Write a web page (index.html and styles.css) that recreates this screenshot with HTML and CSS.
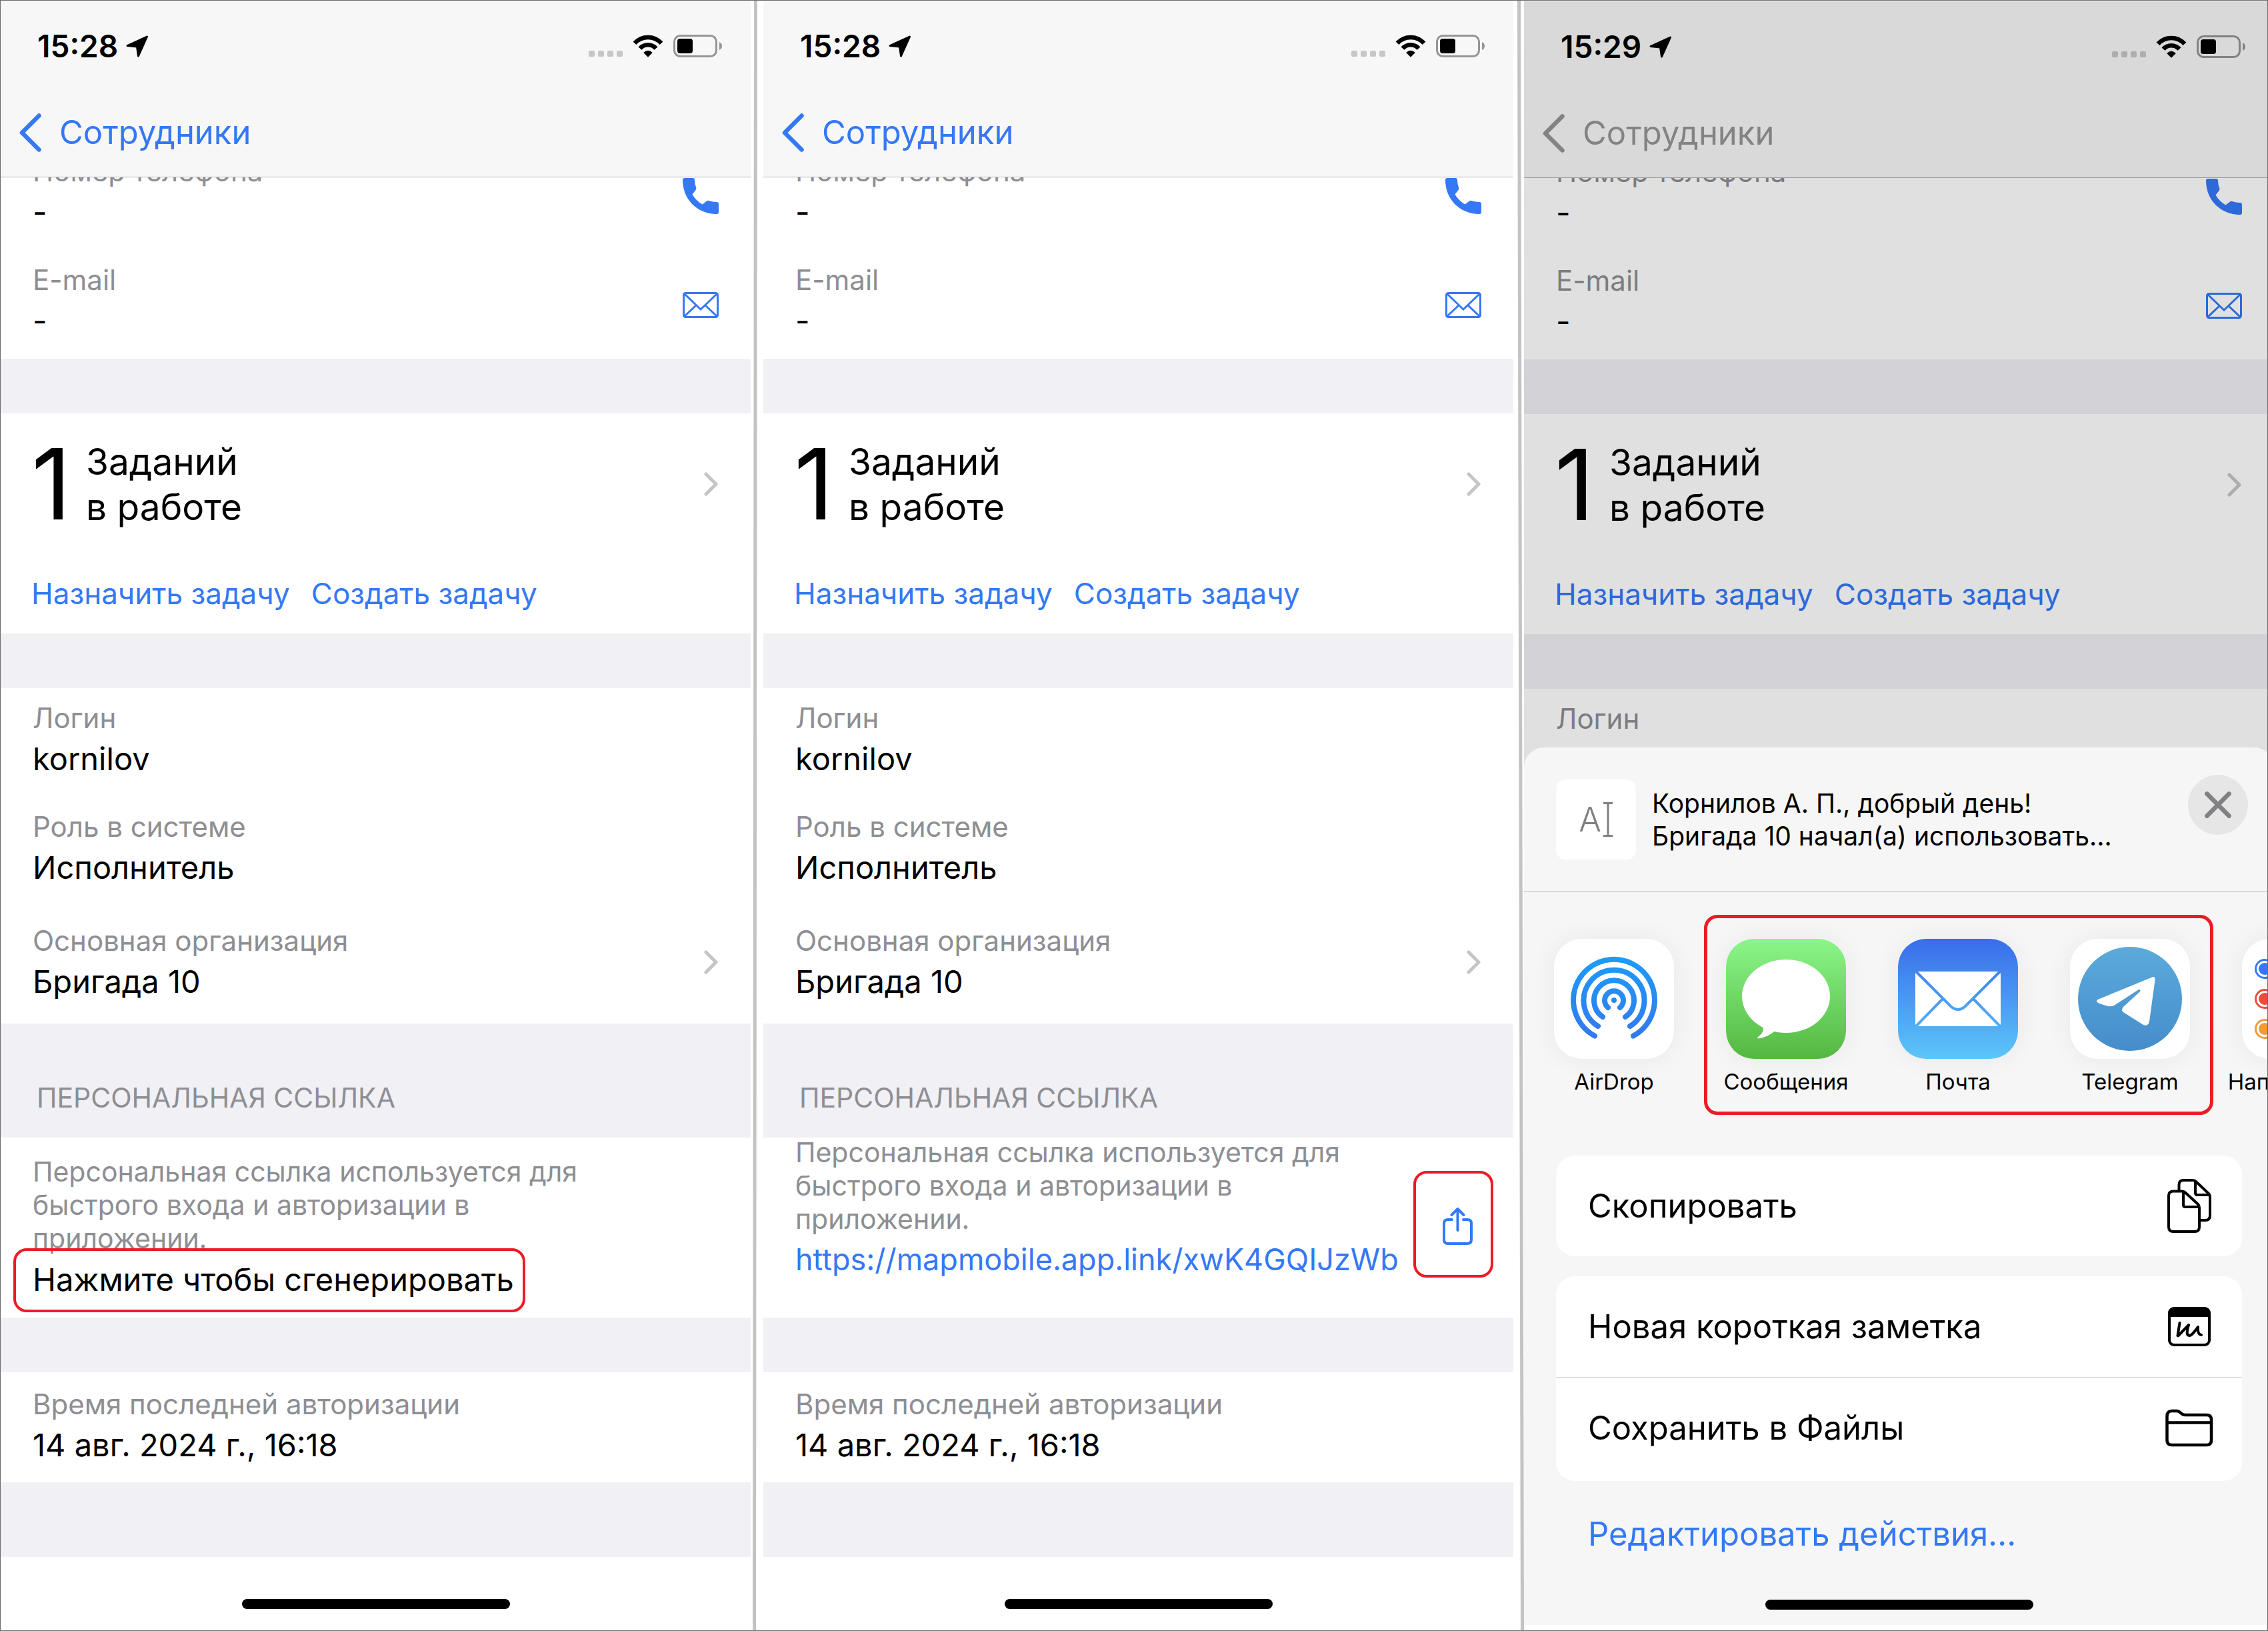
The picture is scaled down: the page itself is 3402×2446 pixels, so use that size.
FILE: index.html
```html
<!DOCTYPE html>
<html lang="ru">
<head>
    <meta charset="UTF-8">
    <meta name="viewport" content="width=device-width, initial-scale=1.0">
    <title>Персональная ссылка</title>
    <link rel="stylesheet" href="styles.css">
</head>
<body>
    <!-- Shared icons -->
    <svg class="sprite" width="0" height="0">
        <symbol id="arrow" viewBox="0 0 34 33">
            <path d="M31.5 2 L18.5 31 L16.5 17 L2 15.5 Z" fill="currentColor" stroke="currentColor" stroke-width="3" stroke-linejoin="round"/>
        </symbol>
        <symbol id="dots" viewBox="0 0 52 34">
            <g fill="currentColor">
                <rect x="0" y="24" width="9" height="9" rx="2"/>
                <rect x="14" y="24" width="9" height="9" rx="2"/>
                <rect x="28" y="24" width="9" height="9" rx="2"/>
                <rect x="42" y="24" width="9" height="9" rx="2"/>
            </g>
        </symbol>
        <symbol id="wifi" viewBox="0 0 46 34">
            <path d="M3 12.8 A27 27 0 0 1 43 12.8 M11 20.6 A16 16 0 0 1 35 20.6" fill="none" stroke="currentColor" stroke-width="6.6"/>
            <path d="M16.2 27 Q23 20.5 29.8 27 L23 33.7 Z" fill="currentColor"/>
        </symbol>
        <symbol id="battery" viewBox="0 0 73 34">
            <rect x="1.5" y="1.5" width="63" height="31" rx="9" fill="none" stroke="#959595" stroke-width="3"/>
            <rect x="6" y="6" width="23" height="22" rx="4"/>
            <path d="M69 11 Q73 13 73 17 Q73 21 69 23 Z" fill="#959595"/>
        </symbol>
        <symbol id="back" viewBox="0 0 34 58">
            <path d="M30.5 3.5 L5 29 L30.5 54.5" fill="none" stroke="currentColor" stroke-width="6.5" stroke-linecap="round" stroke-linejoin="round"/>
        </symbol>
        <symbol id="next" viewBox="0 0 22 36">
            <path d="M3 3 L18 18 L3 33" fill="none" stroke="currentColor" stroke-width="5" stroke-linecap="round" stroke-linejoin="round"/>
        </symbol>
        <symbol id="phone" viewBox="0 0 54 54">
            <path d="M3 0 H15 Q18 0 18 3 Q18 10 20.3 14.5 Q20.8 16.5 19.5 18 L14.5 24.5 Q20 34 29.5 39.5 L36 34.5 Q38 33.3 40 34.3 Q45 36 51 36 Q54 36 54 39 V51 Q54 54 51 54 C22 54 0 32 0 3 Q0 0 3 0 Z" fill="currentColor"/>
        </symbol>
        <symbol id="mail" viewBox="0 0 54 39">
            <g fill="none" stroke="currentColor" stroke-width="3">
                <rect x="1.5" y="1.5" width="51" height="36" rx="3"/>
                <path d="M3 3 L27 26 L51 3 M3 36 L20.5 19.5 M51 36 L33.5 19.5"/>
            </g>
        </symbol>
        <symbol id="share" viewBox="0 0 45 56">
            <g fill="none" stroke="currentColor" stroke-width="4" stroke-linecap="round" stroke-linejoin="round">
                <path d="M14 18 H8 Q2 18 2 24 V48 Q2 54 8 54 H37 Q43 54 43 48 V24 Q43 18 37 18 H31"/>
                <path d="M22.5 34 V3 M13.5 11 L22.5 2 L31.5 11"/>
            </g>
        </symbol>
    </svg>

    <main class="screens">
        <section class="panel">
            <div class="screen">
                <header class="top">
                    <div class="status">
                        <span class="time">15:28</span>
                        <svg class="location"><use href="#arrow"/></svg>
                        <svg class="dots"><use href="#dots"/></svg>
                        <svg class="wifi"><use href="#wifi"/></svg>
                        <svg class="battery"><use href="#battery"/></svg>
                    </div>
                    <a class="back" href="#"><svg><use href="#back"/></svg>Сотрудники</a>
                </header>
                <div class="group contacts">
                    <div class="field">
                        <div><p class="label">Номер телефона</p><p class="value">-</p></div>
                        <button class="icon" aria-label="Позвонить"><svg class="phone-icon"><use href="#phone"/></svg></button>
                    </div>
                    <div class="field">
                        <div><p class="label">E-mail</p><p class="value">-</p></div>
                        <button class="icon" aria-label="Написать"><svg class="mail-icon"><use href="#mail"/></svg></button>
                    </div>
                </div>
                <div class="gap"></div>
                <div class="group tasks">
                    <div class="count">
                        <span class="number">1</span>
                        <span class="caption">Заданий<br>в работе</span>
                        <svg class="next"><use href="#next"/></svg>
                    </div>
                    <div class="links">
                        <a href="#">Назначить задачу</a>
                        <a href="#">Создать задачу</a>
                    </div>
                </div>
                <div class="gap"></div>
                <div class="group">
                    <div class="field">
                        <div><p class="label">Логин</p><p class="value">kornilov</p></div>
                    </div>
                    <div class="field">
                        <div><p class="label">Роль в системе</p><p class="value">Исполнитель</p></div>
                    </div>
                    <div class="field org">
                        <div><p class="label">Основная организация</p><p class="value">Бригада 10</p></div>
                        <svg class="next"><use href="#next"/></svg>
                    </div>
                </div>
                <h2 class="gap-title">ПЕРСОНАЛЬНАЯ ССЫЛКА</h2>
                <div class="group personal">
                    <p class="note">Персональная ссылка используется для быстрого входа и авторизации в приложении.</p>
                    <button class="generate">Нажмите чтобы сгенерировать<span class="mark"></span></button>
                </div>
                <div class="gap"></div>
                <div class="group">
                    <div class="field last">
                        <div><p class="label">Время последней авторизации</p><p class="value">14 авг. 2024 г., 16:18</p></div>
                    </div>
                </div>
                <div class="gap tail"></div>
                <div class="home"></div>
            </div>
        </section>

        <svg class="divider" viewBox="0 0 19 100" preserveAspectRatio="none"><path d="M5 0 H10 L8 100 H3 Z"/></svg>

        <section class="panel">
            <div class="screen">
                <header class="top">
                    <div class="status">
                        <span class="time">15:28</span>
                        <svg class="location"><use href="#arrow"/></svg>
                        <svg class="dots"><use href="#dots"/></svg>
                        <svg class="wifi"><use href="#wifi"/></svg>
                        <svg class="battery"><use href="#battery"/></svg>
                    </div>
                    <a class="back" href="#"><svg><use href="#back"/></svg>Сотрудники</a>
                </header>
                <div class="group contacts">
                    <div class="field">
                        <div><p class="label">Номер телефона</p><p class="value">-</p></div>
                        <button class="icon" aria-label="Позвонить"><svg class="phone-icon"><use href="#phone"/></svg></button>
                    </div>
                    <div class="field">
                        <div><p class="label">E-mail</p><p class="value">-</p></div>
                        <button class="icon" aria-label="Написать"><svg class="mail-icon"><use href="#mail"/></svg></button>
                    </div>
                </div>
                <div class="gap"></div>
                <div class="group tasks">
                    <div class="count">
                        <span class="number">1</span>
                        <span class="caption">Заданий<br>в работе</span>
                        <svg class="next"><use href="#next"/></svg>
                    </div>
                    <div class="links">
                        <a href="#">Назначить задачу</a>
                        <a href="#">Создать задачу</a>
                    </div>
                </div>
                <div class="gap"></div>
                <div class="group">
                    <div class="field">
                        <div><p class="label">Логин</p><p class="value">kornilov</p></div>
                    </div>
                    <div class="field">
                        <div><p class="label">Роль в системе</p><p class="value">Исполнитель</p></div>
                    </div>
                    <div class="field org">
                        <div><p class="label">Основная организация</p><p class="value">Бригада 10</p></div>
                        <svg class="next"><use href="#next"/></svg>
                    </div>
                </div>
                <h2 class="gap-title">ПЕРСОНАЛЬНАЯ ССЫЛКА</h2>
                <div class="group personal ready">
                    <div>
                        <p class="note">Персональная ссылка используется для быстрого входа и авторизации в приложении.</p>
                        <a class="url" href="#">https://mapmobile.app.link/xwK4GQIJzWb</a>
                    </div>
                    <button class="icon share" aria-label="Поделиться"><svg><use href="#share"/></svg><span class="mark"></span></button>
                </div>
                <div class="gap"></div>
                <div class="group">
                    <div class="field last">
                        <div><p class="label">Время последней авторизации</p><p class="value">14 авг. 2024 г., 16:18</p></div>
                    </div>
                </div>
                <div class="gap tail"></div>
                <div class="home"></div>
            </div>
        </section>

        <svg class="divider" viewBox="0 0 16 100" preserveAspectRatio="none"><path d="M6 0 H11 L16 100 H11 Z"/></svg>

        <section class="panel cropped">
            <div class="screen">
                <header class="top inactive">
                    <div class="status">
                        <span class="time">15:29</span>
                        <svg class="location"><use href="#arrow"/></svg>
                        <svg class="dots"><use href="#dots"/></svg>
                        <svg class="wifi"><use href="#wifi"/></svg>
                        <svg class="battery"><use href="#battery"/></svg>
                    </div>
                    <a class="back" href="#"><svg><use href="#back"/></svg>Сотрудники</a>
                </header>
                <div class="group contacts">
                    <div class="field">
                        <div><p class="label">Номер телефона</p><p class="value">-</p></div>
                        <button class="icon" aria-label="Позвонить"><svg class="phone-icon"><use href="#phone"/></svg></button>
                    </div>
                    <div class="field">
                        <div><p class="label">E-mail</p><p class="value">-</p></div>
                        <button class="icon" aria-label="Написать"><svg class="mail-icon"><use href="#mail"/></svg></button>
                    </div>
                </div>
                <div class="gap"></div>
                <div class="group tasks">
                    <div class="count">
                        <span class="number">1</span>
                        <span class="caption">Заданий<br>в работе</span>
                        <svg class="next"><use href="#next"/></svg>
                    </div>
                    <div class="links">
                        <a href="#">Назначить задачу</a>
                        <a href="#">Создать задачу</a>
                    </div>
                </div>
                <div class="gap"></div>
                <div class="group">
                    <div class="field">
                        <p class="label">Логин</p>
                    </div>
                </div>
                <div class="dim"></div>

                <div class="sheet">
                    <div class="sheet-head">
                        <div class="thumb">A<svg viewBox="0 0 16 52"><path d="M1 1.5 H15 M8 1.5 V50.5 M1 50.5 H15" fill="none" stroke="currentColor" stroke-width="3"/></svg></div>
                        <p class="message">Корнилов А. П., добрый день!<br>Бригада 10 начал(а) использовать…</p>
                        <button class="close" aria-label="Закрыть"><svg viewBox="0 0 38 38"><path d="M4 4 L34 34 M34 4 L4 34" fill="none" stroke="#818185" stroke-width="6" stroke-linecap="round"/></svg></button>
                    </div>

                    <div class="apps">
                        <button class="app">
                            <svg class="tile" viewBox="0 0 180 180">
                                <defs><linearGradient id="airdropFill" gradientUnits="userSpaceOnUse" x1="0" y1="27" x2="0" y2="150"><stop offset="0" stop-color="#1c9cf9"/><stop offset="1" stop-color="#3478ee"/></linearGradient></defs>
                                <rect width="180" height="180" fill="#fff"/>
                                <g fill="none" stroke="url(#airdropFill)" stroke-width="8" stroke-linecap="round">
                                    <path d="M61 145.500 A61 61 0 1 1 119 145.500"/>
                                    <path d="M66 131 A45.500 45.500 0 1 1 114 131"/>
                                    <path d="M73 117 A30 30 0 1 1 107 117"/>
                                    <path d="M81 103 A14 14 0 1 1 99 103"/>
                                </g>
                                <circle cx="90" cy="92" r="4" fill="url(#airdropFill)"/>
                            </svg>
                            <span>AirDrop</span>
                        </button>
                        <div class="marked">
                            <button class="app">
                                <svg class="tile" viewBox="0 0 180 180">
                                    <defs><linearGradient id="messagesFill" x1="0" y1="0" x2="0" y2="1"><stop offset="0" stop-color="#8bf689"/><stop offset="1" stop-color="#54b741"/></linearGradient></defs>
                                    <rect width="180" height="180" fill="url(#messagesFill)"/>
                                    <ellipse cx="90" cy="86" rx="66" ry="55" fill="#fff"/>
                                    <path d="M53 129 C60 137 53 143 48 147 C46 149 48 150 51 149 C61 147 67 143 74 138 Z" fill="#fff"/>
                                </svg>
                                <span>Сообщения</span>
                            </button>
                            <button class="app">
                                <svg class="tile" viewBox="0 0 180 180">
                                    <defs><linearGradient id="mailFill" gradientUnits="userSpaceOnUse" x1="0" y1="0" x2="0" y2="180"><stop offset="0" stop-color="#386dea"/><stop offset="1" stop-color="#5cc6f9"/></linearGradient></defs>
                                    <rect width="180" height="180" fill="url(#mailFill)"/>
                                    <rect x="26" y="49" width="128" height="82" rx="4" fill="#fff"/>
                                    <path d="M27 49 L79 101 Q90 111 101 101 L153 49 M27 131 L67 90 M153 131 L113 90" fill="none" stroke="url(#mailFill)" stroke-width="4"/>
                                </svg>
                                <span>Почта</span>
                            </button>
                            <button class="app">
                                <svg class="tile" viewBox="0 0 180 180">
                                    <defs><linearGradient id="telegramFill" x1="0" y1="0" x2="0" y2="1"><stop offset="0" stop-color="#5caadc"/><stop offset="1" stop-color="#458dcb"/></linearGradient></defs>
                                    <rect width="180" height="180" fill="#fff"/>
                                    <circle cx="90" cy="90" r="78" fill="url(#telegramFill)"/>
                                    <path d="M122 58 Q128 55 127.500 62 L119 124 Q117 132 110 129 L80 110 Q76 107 80 102 L105 79 Q107 76 103 76 L66 100 Q61 102 57 101 L44 97 Q36 93 44 90 Z" fill="#fff"/>
                                </svg>
                                <span>Telegram</span>
                            </button>
                            <span class="mark"></span>
                        </div>
                        <button class="app">
                            <svg class="tile" viewBox="0 0 180 180">
                                <rect width="180" height="180" fill="#fff"/>
                                <g fill="#3478f6"><circle cx="34" cy="45" r="9"/><circle cx="34" cy="45" r="13.500" fill="none" stroke="#3478f6" stroke-width="3"/></g>
                                <g fill="#eb4e3d"><circle cx="34" cy="90" r="9"/><circle cx="34" cy="90" r="13.500" fill="none" stroke="#eb4e3d" stroke-width="3"/></g>
                                <g fill="#f19a37"><circle cx="34" cy="135" r="9"/><circle cx="34" cy="135" r="13.500" fill="none" stroke="#f19a37" stroke-width="3"/></g>
                            </svg>
                            <span>Напоминания</span>
                        </button>
                    </div>

                    <div class="card">
                        <button class="action">Скопировать
                            <svg viewBox="-3 0 72 81">
                                <g fill="none" stroke="currentColor" stroke-width="4" stroke-linejoin="round">
                                    <path d="M17.500 18 V9 Q17.500 2 24 2 H38 Q41 2 43 4 L62 22 Q64 24 64 27 V55 Q64 62 57 62 H50"/>
                                    <path d="M42 3 V21 Q42 24 45 24 H63"/>
                                    <path d="M9 18.500 H22 Q25 18.500 27 20.500 L46 38 Q48 40 48 43 V72 Q48 79 41 79 H9 Q2 79 2 72 V25 Q2 18.500 9 18.500 Z"/>
                                    <path d="M24 20 V39 Q24 42 27 42 H47"/>
                                </g>
                            </svg>
                        </button>
                    </div>
                    <div class="card">
                        <button class="action">Новая короткая заметка
                            <svg viewBox="-4 0 72 59">
                                <rect x="2" y="2" width="60" height="55" rx="7" fill="none" stroke="currentColor" stroke-width="4"/>
                                <path d="M2 15 V7 Q2 2 8 2 H56 Q62 2 62 7 V15 Z"/>
                                <path d="M17.500 24 L14.500 43 Q15 44 16.500 42 L31 27 Q26 43 32 43 Q36 43 45 30 Q44 41 50 42" fill="none" stroke="currentColor" stroke-width="4" stroke-linecap="round" stroke-linejoin="round"/>
                            </svg>
                        </button>
                        <button class="action">Сохранить в Файлы
                            <svg viewBox="0 0 72 57">
                                <path d="M2.500 11 Q2.500 3 10 3 H17 Q20 3 23 6 Q26 9 30 9 H62 Q69 9 69 16 V47 Q69 54 62 54 H10 Q2.500 54 2.500 47 Z M3 20.500 H69" fill="none" stroke="currentColor" stroke-width="4.500"/>
                            </svg>
                        </button>
                    </div>
                    <a class="edit" href="#">Редактировать действия…</a>
                    <div class="home"></div>
                </div>
            </div>
        </section>
    </main>
</body>
</html>
```
FILE: styles.css
```css
* {
    box-sizing: border-box;
}
body {
    margin: 0;
    font-family: Inter, "Liberation Sans", sans-serif;
    color: #000;
    background-color: #fff;
}
p, h2 {
    margin: 0;
    font-weight: 400;
}
a {
    color: #3478f6;
    text-decoration: none;
}
button {
    font: inherit;
    color: inherit;
    background: none;
    border: 0;
    padding: 0;
    text-align: left;
    cursor: pointer;
}
svg {
    display: block;
    flex: none;
}
.sprite {
    position: absolute;
}
.screens {
    display: grid;
    grid-template-columns: 1125fr 19px 1125fr 16px 1115fr;
    min-height: 100vh;
    border: 1px solid #6b6b6b;
}
.panel {
    overflow: hidden;
}
.divider {
    width: 100%;
    height: 100%;
    fill: #c3c3c3;
    min-height: 0;
    contain: size;
}
.screen {
    position: relative;
    height: 100%;
}

/* Status and navigation bars */
.top {
    position: relative;
    z-index: 1;
    padding-top: 40px;
    padding-bottom: 36px;
    background-color: #f7f7f7;
    border-bottom: 1px solid #b0b0b0;
}
.status {
    display: flex;
    align-items: center;
    padding: 0 43px 0 55px;
    margin-bottom: 72px;
}
.time {
    font-size: 46px;
    line-height: 56px;
    font-weight: 600;
}
.location {
    width: 34px;
    height: 33px;
    margin-left: 12px;
}
.dots {
    width: 52px;
    height: 34px;
    margin-left: auto;
    color: #c6c6c6;
}
.wifi {
    width: 46px;
    height: 34px;
    margin: 0 15px 0 14px;
}
.battery {
    width: 73px;
    height: 34px;
}
.back {
    display: flex;
    align-items: center;
    gap: 27px;
    padding-left: 27px;
    font-size: 49px;
    line-height: 60px;
}
.back svg {
    width: 34px;
    height: 58px;
}
.inactive .back {
    color: #969696;
}

/* Groups */
.contacts {
    margin-top: -54px;
}
.gap {
    height: 82px;
    background-color: #f1f0f5;
}
.tail {
    height: 112px;
}
.gap-title {
    padding: 86px 54px 35px;
    font-size: 41px;
    line-height: 50px;
    color: #8e8e93;
    background-color: #f1f0f5;
}
.field {
    display: flex;
    align-items: center;
    justify-content: space-between;
    padding: 20px 48px 29px;
}
.org {
    padding-top: 28px;
    padding-bottom: 35px;
}
.last {
    padding-top: 23px;
    padding-bottom: 28px;
}
.label {
    margin-bottom: 8px;
    font-size: 42px;
    line-height: 50px;
    color: #8e8e93;
}
.value {
    font-size: 47px;
    line-height: 56px;
}
.icon {
    color: #3478f6;
}
.contacts .icon {
    margin-top: 10px;
}
.phone-icon {
    width: 54px;
    height: 54px;
}
.mail-icon {
    width: 54px;
    height: 39px;
}
.next {
    width: 22px;
    height: 36px;
    margin-left: auto;
    color: #c5c5c7;
}

/* Tasks */
.tasks {
    padding: 38px 48px 33px 46px;
}
.count {
    display: flex;
    align-items: center;
    margin-bottom: 69px;
}
.number {
    width: 82px;
    font-size: 147px;
    line-height: 136px;
}
.caption {
    font-size: 55px;
    line-height: 68px;
}
.links {
    display: flex;
    gap: 32px;
    font-size: 44px;
    line-height: 54px;
}

/* Personal link */
.personal {
    min-height: 270px;
    padding: 26px 61px 0 48px;
}
.note {
    max-width: 880px;
    margin-bottom: 9px;
    font-size: 41px;
    line-height: 50px;
    color: #8e8e93;
}
.generate {
    position: relative;
    display: block;
    font-size: 47px;
    line-height: 56px;
}
.mark {
    position: absolute;
    inset: -19px -17px -21px -29px;
    border: 4px solid #ed1c24;
    border-radius: 20px;
    pointer-events: none;
}
.ready {
    display: flex;
    justify-content: space-between;
    align-items: center;
    padding-top: 0;
    padding-bottom: 60px;
}
.ready > div {
    margin-top: -4px;
}
.url {
    display: block;
    font-size: 45px;
    line-height: 54px;
    white-space: nowrap;
}
.share {
    position: relative;
    margin-top: 56px;
}
.share svg {
    width: 45px;
    height: 56px;
}
.share .mark {
    inset: -55px -31px -49px -44px;
}
.home {
    width: 402px;
    height: 15px;
    margin: 63px auto 0;
    border-radius: 8px;
    background-color: #000;
}

/* Share sheet over the dimmed screen */
.cropped {
    padding: 1px 0 8px;
}
.cropped .screen {
    width: calc(100% + 10px);
}
.dim {
    position: absolute;
    inset: 0;
    z-index: 2;
    background-color: rgba(0, 0, 0, 0.12);
}
.sheet {
    position: absolute;
    left: 0;
    right: 0;
    bottom: 0;
    z-index: 3;
    padding-bottom: 23px;
    border-radius: 30px 30px 0 0;
    background-color: #f6f6f6;
}
.sheet-head {
    display: flex;
    align-items: center;
    padding: 48px 39px 47px 48px;
    border-bottom: 1px solid #c0c0c2;
}
.thumb {
    display: flex;
    align-items: center;
    justify-content: center;
    gap: 2px;
    width: 120px;
    height: 120px;
    border-radius: 14px;
    font-size: 50px;
    font-weight: 300;
    color: #808080;
    background-color: #fff;
}
.thumb svg {
    width: 16px;
    height: 52px;
}
.message {
    margin-left: 24px;
    font-size: 39px;
    line-height: 49px;
    white-space: nowrap;
}
.close {
    display: flex;
    align-items: center;
    justify-content: center;
    align-self: flex-start;
    width: 90px;
    height: 90px;
    margin-top: -7px;
    margin-left: auto;
    border-radius: 50%;
    background-color: #e6e6e7;
}
.close svg {
    width: 42px;
    height: 42px;
}
.apps {
    display: flex;
    gap: 78px;
    padding: 71px 0 91px 45px;
    overflow: hidden;
}
.marked {
    position: relative;
    display: flex;
    gap: 78px;
}
.marked .mark {
    inset: -36px -35px -30px -33px;
    border-width: 5px;
}
.app {
    display: flex;
    flex: none;
    flex-direction: column;
    align-items: center;
    gap: 14px;
    width: 180px;
    font-size: 33px;
    line-height: 40px;
    white-space: nowrap;
}
.tile {
    width: 180px;
    height: 180px;
    border-radius: 42px;
    box-shadow: 0 0 40px rgba(0, 0, 0, 0.06);
}
.card {
    margin: 0 48px 30px;
    border-radius: 28px;
    background-color: #fff;
}
.action {
    display: flex;
    align-items: center;
    justify-content: space-between;
    width: 100%;
    height: 151px;
    padding: 0 43px 0 48px;
    font-size: 49px;
    line-height: 60px;
}
.action + .action {
    height: 156px;
    padding-bottom: 4px;
    border-top: 1px solid #d0d0d2;
}
.action svg {
    width: 72px;
}
.edit {
    display: block;
    padding: 20px 96px 5px;
    font-size: 49px;
    line-height: 60px;
}
```
